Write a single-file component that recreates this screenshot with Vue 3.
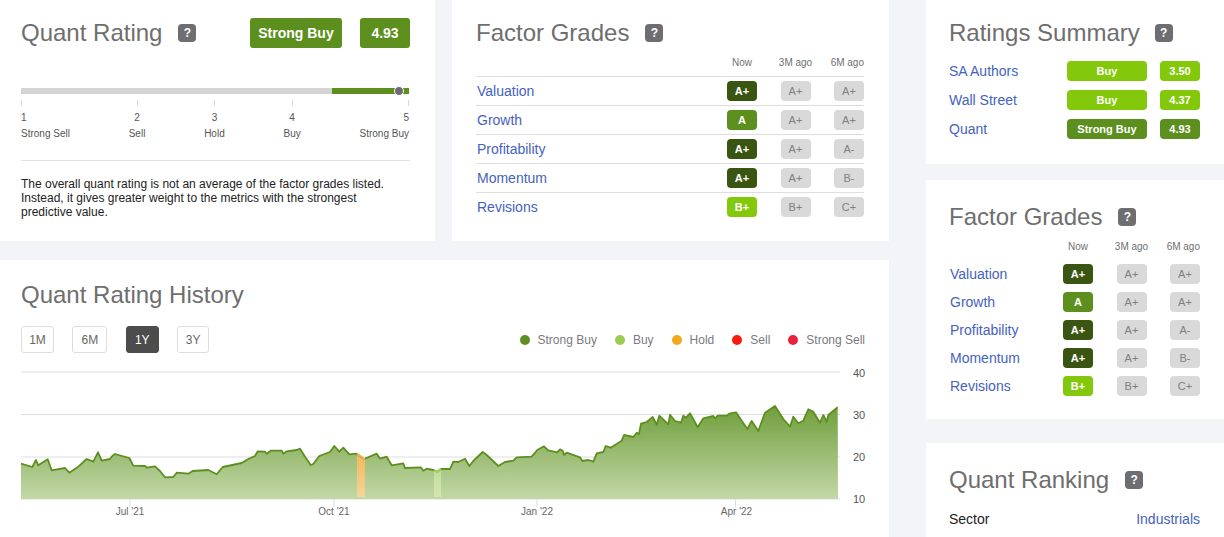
<script setup>
import { computed } from 'vue'

const zoomA = [[63,611],[97,621],[108,600],[115,616],[143,598],[155,631],[195,624],[208,638],[235,620],[260,597],[280,605],[294,577],[305,602],[330,597],[337,588],[345,582],[388,594],[400,617],[435,618],[440,623],[465,619],[480,633],[495,652],[520,651],[530,638],[565,641],[578,633],[625,630],[650,643],[668,621],[725,609],[745,597],[765,588],[773,574],[795,575],[800,581],[812,572],[845,572],[850,581],[860,574],[890,570],[900,566],[915,590],[932,615],[940,612],[958,588],[990,576],[1003,558],[1018,575],[1030,563],[1048,583],[1070,581],[1092,597],[1130,581],[1140,596],[1160,590],[1175,616],[1210,610],[1215,624],[1262,622],[1270,632],[1280,626],[1300,630],[1312,635],[1322,627],[1350,627]]
const zoomB = [[10,425],[25,426],[45,416],[58,438],[70,423],[98,396],[110,405],[145,438],[165,426],[190,422],[200,412],[245,410],[262,390],[282,379],[295,391],[322,397],[330,388],[338,392],[342,405],[350,398],[390,412],[397,423],[415,420],[430,425],[440,400],[460,396],[467,378],[482,383],[515,362],[522,345],[550,351],[560,338],[567,342],[573,311],[590,306],[608,291],[620,314],[628,287],[655,313],[660,284],[675,303],[693,308],[700,287],[708,293],[720,280],[743,322],[760,295],[790,288],[795,295],[803,287],[830,287],[838,281],[858,277],[892,327],[905,303],[925,333],[945,278],[975,258],[1000,297],[1020,320],[1030,290],[1045,310],[1060,302],[1075,268],[1090,275],[1110,308],[1120,285],[1130,305],[1135,285],[1163,262]]
// chart coordinates: svg origin is page (0,360)
const pts = [
  ...zoomA.map(([x, y]) => [x / 3, 260 + y / 3 - 360]),
  ...zoomB.map(([x, y]) => [450 + x / 3, 320 + y / 3 - 360]),
]
const fmt = p => p.map(([x, y]) => `${x.toFixed(1)},${y.toFixed(1)}`).join(' ')
const linePts = computed(() => fmt(pts))
const areaPts = computed(() => fmt([[21, 139], ...pts, [838, 139]]))

function clip(x0, x1) {
  const out = []
  for (let i = 0; i < pts.length - 1; i++) {
    const [ax, ay] = pts[i], [bx, by] = pts[i + 1]
    if (bx < x0 || ax > x1) continue
    const l = Math.max(ax, x0), r = Math.min(bx, x1)
    const f = x => ay + (by - ay) * (x - ax) / (bx - ax || 1)
    out.push([l, f(l)], [r, f(r)])
  }
  return out
}
const band = (x0, x1) => fmt([[x0, 137], ...clip(x0, x1), [x1, 137]])
const holdBand = band(357, 365)
const buyBand = band(434, 441)
const holdLine = fmt(clip(357, 365))
const buyLine = fmt(clip(434, 441))

const grid = [
  { y: 12, label: '40', ly: 17 },
  { y: 54.5, label: '30', ly: 59 },
  { y: 97, label: '20', ly: 101 },
  { y: 139, label: '10', ly: 143 },
]
const xTicks = [
  { x: 130, lx: 130, label: "Jul '21" },
  { x: 334, lx: 334, label: "Oct '21" },
  { x: 537, lx: 537, label: "Jan '22" },
  { x: 735.5, lx: 736.5, label: "Apr '22" },
]

const scale = [
  ['1', 'Strong Sell'],
  ['2', 'Sell'],
  ['3', 'Hold'],
  ['4', 'Buy'],
  ['5', 'Strong Buy'],
]
const factors = [
  { name: 'Valuation', now: 'A+', tone: 'dark', m3: 'A+', m6: 'A+' },
  { name: 'Growth', now: 'A', tone: 'mid', m3: 'A+', m6: 'A+' },
  { name: 'Profitability', now: 'A+', tone: 'dark', m3: 'A+', m6: 'A-' },
  { name: 'Momentum', now: 'A+', tone: 'dark', m3: 'A+', m6: 'B-' },
  { name: 'Revisions', now: 'B+', tone: 'lime', m3: 'B+', m6: 'C+' },
]
const summary = [
  { name: 'SA Authors', label: 'Buy', score: '3.50', tone: 'lime' },
  { name: 'Wall Street', label: 'Buy', score: '4.37', tone: 'lime' },
  { name: 'Quant', label: 'Strong Buy', score: '4.93', tone: 'mid' },
]
const ranges = [
  { label: '1M', w: 33 },
  { label: '6M', w: 35 },
  { label: '1Y', w: 33 },
  { label: '3Y', w: 32 },
]
const legend = [
  { label: 'Strong Buy', color: '#5f8f24' },
  { label: 'Buy', color: '#9bcc4f' },
  { label: 'Hold', color: '#f0a81e' },
  { label: 'Sell', color: '#f91b0f' },
  { label: 'Strong Sell', color: '#e8223c' },
]
</script>

<template>
  <div class="page">
    <div class="left">
      <div class="top-row">
        <section class="card rating">
          <header class="head">
            <h2>Quant Rating</h2>
            <span class="help">?</span>
            <span class="big-badge wide">Strong Buy</span>
            <span class="big-badge score">4.93</span>
          </header>
          <div class="bar">
            <span class="bar-green"></span>
            <span class="bar-dot"></span>
          </div>
          <div class="scale">
            <div v-for="s in scale" :key="s[0]" class="scale-item">
              <i class="tick"></i>
              <span class="num">{{ s[0] }}</span>
              <span class="lab">{{ s[1] }}</span>
            </div>
          </div>
          <p class="note">The overall quant rating is not an average of the factor grades listed. Instead, it gives greater weight to the metrics with the strongest predictive value.</p>
        </section>

        <section class="card grades">
          <header class="head">
            <h2>Factor Grades</h2>
            <span class="help">?</span>
          </header>
          <div class="grid-row col-head">
            <span></span><span>Now</span><span>3M ago</span><span>6M ago</span>
          </div>
          <div v-for="f in factors" :key="f.name" class="grid-row lined">
            <a class="link">{{ f.name }}</a>
            <span class="grade" :class="f.tone">{{ f.now }}</span>
            <span class="grade old">{{ f.m3 }}</span>
            <span class="grade old">{{ f.m6 }}</span>
          </div>
        </section>
      </div>

      <section class="card history">
        <header class="head"><h2>Quant Rating History</h2></header>
        <div class="controls">
          <div class="ranges">
            <button
              v-for="r in ranges"
              :key="r.label"
              class="range"
              :class="{ on: r.label === '1Y' }"
              :style="{ width: r.w + 'px' }"
            >{{ r.label }}</button>
          </div>
          <ul class="legend">
            <li v-for="l in legend" :key="l.label">
              <i :style="{ background: l.color }"></i>{{ l.label }}
            </li>
          </ul>
        </div>
        <svg class="chart" width="889" height="177" viewBox="0 0 889 177">
          <defs>
            <linearGradient id="fill" gradientUnits="userSpaceOnUse" x1="0" y1="45" x2="0" y2="139">
              <stop offset="0" stop-color="#6f9e3a" />
              <stop offset="1" stop-color="#c3d8a8" />
            </linearGradient>
            <linearGradient id="holdFill" gradientUnits="userSpaceOnUse" x1="0" y1="95" x2="0" y2="139">
              <stop offset="0" stop-color="#f2b85c" />
              <stop offset="1" stop-color="#f6d79c" />
            </linearGradient>
            <linearGradient id="buyFill" gradientUnits="userSpaceOnUse" x1="0" y1="105" x2="0" y2="139">
              <stop offset="0" stop-color="#c2dd94" />
              <stop offset="1" stop-color="#d5e6b6" />
            </linearGradient>
          </defs>
          <line v-for="g in grid" :key="g.y" x1="21" x2="840" :y1="g.y" :y2="g.y" class="gridline" />
          <polygon :points="areaPts" fill="url(#fill)" />
          <polygon :points="holdBand" fill="url(#holdFill)" />
          <polygon :points="buyBand" fill="url(#buyFill)" />
          <polyline :points="linePts" class="line" />
          <polyline :points="holdLine" class="line hold" />
          <polyline :points="buyLine" class="line buy" />
          <line v-for="t in xTicks" :key="t.x" :x1="t.x" :x2="t.x" y1="139" y2="147" class="xtick" />
          <text v-for="t in xTicks" :key="t.label" :x="t.lx" y="155" text-anchor="middle" class="xlabel">{{ t.label }}</text>
          <text v-for="g in grid" :key="g.label" x="853" :y="g.ly" class="ylabel">{{ g.label }}</text>
        </svg>
      </section>
    </div>

    <div class="right">
      <section class="card side sum">
        <header class="head">
          <h2>Ratings Summary</h2>
          <span class="help">?</span>
        </header>
        <div v-for="s in summary" :key="s.name" class="sum-row">
          <a class="link">{{ s.name }}</a>
          <span class="grade" :class="s.tone">{{ s.label }}</span>
          <span class="grade" :class="s.tone">{{ s.score }}</span>
        </div>
      </section>

      <section class="card side fac">
        <header class="head">
          <h2>Factor Grades</h2>
          <span class="help">?</span>
        </header>
        <div class="grid-row col-head">
          <span></span><span>Now</span><span>3M ago</span><span>6M ago</span>
        </div>
        <div v-for="f in factors" :key="f.name" class="grid-row plain">
          <a class="link">{{ f.name }}</a>
          <span class="grade" :class="f.tone">{{ f.now }}</span>
          <span class="grade old">{{ f.m3 }}</span>
          <span class="grade old">{{ f.m6 }}</span>
        </div>
      </section>

      <section class="card side rank">
        <header class="head">
          <h2>Quant Ranking</h2>
          <span class="help">?</span>
        </header>
        <div class="rank-row">
          <span>Sector</span>
          <a class="link">Industrials</a>
        </div>
      </section>
    </div>
  </div>
</template>

<style>
html, body { margin: 0; background: #f2f4f8; }
</style>

<style scoped>
.page {
  width: 1224px;
  height: 537px;
  overflow: hidden;
  display: flex;
  gap: 37px;
  background: #f2f4f8;
  font-family: "Liberation Sans", Arial, sans-serif;
  color: #222;
}
.left { width: 889px; flex: none; display: flex; flex-direction: column; gap: 19px; }
.top-row { display: flex; gap: 17px; height: 241px; }
.right { flex: 1; display: flex; flex-direction: column; }
.card { background: #fff; box-sizing: border-box; }

.head { display: flex; align-items: center; height: 30px; }
h2 { margin: 0; font-size: 24px; font-weight: 400; color: #6e6e6e; white-space: nowrap; }
.help {
  width: 18px; height: 18px; margin-left: 16px; border-radius: 4px;
  background: #6e6e72; color: #fff; font-size: 12px; font-weight: 700;
  display: flex; align-items: center; justify-content: center;
}

.rating { width: 435px; padding: 18px 25px 0 21px; }
.rating .help { margin-left: 16px; margin-right: auto; }
.big-badge {
  height: 30px; border-radius: 3px; background: #5c8f1e; color: #fff;
  font-size: 14px; font-weight: 700; display: flex; align-items: center; justify-content: center;
}
.wide { width: 92px; margin-right: 18px; }
.score { width: 50px; }

.bar { position: relative; height: 6px; margin-top: 40px; background: #d4d4d4; width: 388px; }
.bar-green { position: absolute; left: 311px; right: 0; top: 0; bottom: 0; background: #5c8f1e; }
.bar-dot {
  position: absolute; left: 373px; top: -2px; width: 10px; height: 10px; box-sizing: border-box;
  border-radius: 50%; background: #6b6b73; border: 1px solid #fff;
}
.scale { display: flex; justify-content: space-between; margin-top: 6px; width: 388px; height: 42px; }
.scale-item { display: flex; flex-direction: column; align-items: center; font-size: 10px; color: #555; }
.scale-item:first-child { align-items: flex-start; }
.scale-item:last-child { align-items: flex-end; }
.tick { width: 1px; height: 6px; background: #d8d8d8; }
.num { margin-top: 6px; line-height: 12px; }
.lab { margin-top: 4px; line-height: 12px; }
.note {
  margin: 0; margin-top: 18px; padding-top: 16px; border-top: 1px solid #e2e2e2;
  font-size: 12px; line-height: 14px; color: #222; width: 389px; box-sizing: border-box;
}

.grades { flex: 1; padding: 18px 25px 0 24px; }
.grades .link { padding-left: 1px; }
.grid-row {
  display: grid; grid-template-columns: 1fr 30px 30px 30px; column-gap: 23.5px; align-items: center;
}
.col-head { font-size: 10px; color: #6f6f6f; height: 28px; }
.col-head span { white-space: nowrap; display: flex; justify-content: center; }
.col-head span:last-child { justify-content: flex-end; }
.lined { height: 29px; box-sizing: border-box; border-top: 1px solid #ddd; }
.plain { height: 28px; }
.link { color: #4562c0; font-size: 14px; }
.grade {
  height: 20px; border-radius: 4px; font-size: 11px; font-weight: 700; color: #fff;
  display: flex; align-items: center; justify-content: center;
}
.grade.dark { background: #3a5412; }
.grade.mid { background: #5c8f1e; }
.grade.lime { background: #84c80c; }
.grade.old { background: #d9d9d9; color: #808080; font-weight: 400; }

.history { flex: 1; padding-top: 20px; position: relative; }
.history .head { padding-left: 21px; }
.controls {
  display: flex; justify-content: space-between; align-items: center;
  margin-top: 16px; padding: 0 24px 0 21px; height: 27px;
}
.ranges { display: flex; gap: 18.4px; }
.range {
  height: 27px; padding: 0; box-sizing: border-box;
  background: #fff; border: 1px solid #ddd; border-radius: 3px;
  font: 12px "Liberation Sans", Arial, sans-serif; color: #666;
}
.range.on { background: #4c4c4c; border-color: #4c4c4c; color: #fff; }
.legend { display: flex; gap: 18px; list-style: none; margin: 0; padding: 0; font-size: 12px; color: #7a7a80; }
.legend li { display: flex; align-items: center; }
.legend i { width: 10px; height: 10px; border-radius: 50%; margin-right: 8px; }
.chart { display: block; margin-top: 7px; }
.gridline { stroke: #ddd; stroke-width: 1; }
.line { fill: none; stroke: #5c8f1e; stroke-width: 1.8; stroke-linejoin: round; }
.line.hold { stroke: #f0b050; }
.line.buy { stroke: #a5cf5f; }
.xtick { stroke: #ddd; }
.xlabel { font-size: 10px; fill: #666; }
.ylabel { font-size: 11px; fill: #555; }

.side { padding: 0 24px 0 23px; }
.sum { height: 164px; padding-top: 18px; }
.sum .help { margin-left: 15px; }
.sum-row { display: grid; grid-template-columns: 1fr 80px 40px; column-gap: 13px; align-items: center; height: 29px; }
.sum .head { margin-bottom: 8px; }
.fac { height: 239px; margin-top: 16px; padding-top: 22px; }
.fac .link { padding-left: 1px; }
.rank { flex: 1; margin-top: 24px; padding-top: 22px; }
.rank-row { display: flex; justify-content: space-between; align-items: center; margin-top: 16px; font-size: 14px; color: #222; }
</style>
